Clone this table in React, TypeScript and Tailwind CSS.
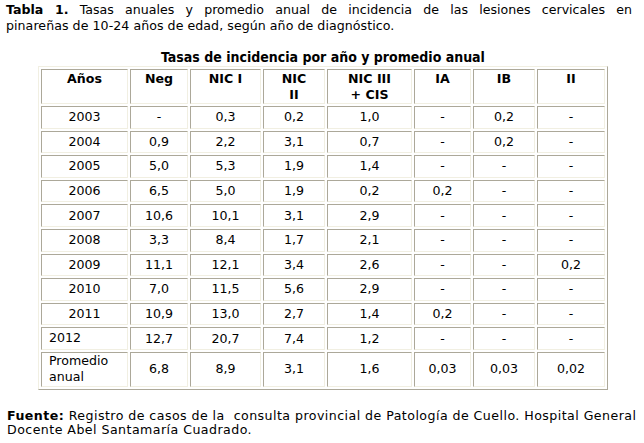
import React from "react";

const headers = [
  { label: ["Años"], w: "w-[87px]" },
  { label: ["Neg"], w: "w-[58px]" },
  { label: ["NIC I"], w: "w-[71px]" },
  { label: ["NIC", "II"], w: "w-[62px]" },
  { label: ["NIC III", "+ CIS"], w: "w-[85px]" },
  { label: ["IA"], w: "w-[57px]" },
  { label: ["IB"], w: "w-[62px]" },
  { label: ["II"], w: "w-[68px]" },
];

const rows = [
  ["2003", "-", "0,3", "0,2", "1,0", "-", "0,2", "-"],
  ["2004", "0,9", "2,2", "3,1", "0,7", "-", "0,2", "-"],
  ["2005", "5,0", "5,3", "1,9", "1,4", "-", "-", "-"],
  ["2006", "6,5", "5,0", "1,9", "0,2", "0,2", "-", "-"],
  ["2007", "10,6", "10,1", "3,1", "2,9", "-", "-", "-"],
  ["2008", "3,3", "8,4", "1,7", "2,1", "-", "-", "-"],
  ["2009", "11,1", "12,1", "3,4", "2,6", "-", "-", "0,2"],
  ["2010", "7,0", "11,5", "5,6", "2,9", "-", "-", "-"],
  ["2011", "10,9", "13,0", "2,7", "1,4", "0,2", "-", "-"],
];

const promedio = ["6,8", "8,9", "3,1", "1,6", "0,03", "0,03", "0,02"];

const cell =
  "border border-t-[#aca899] border-l-[#aca899] border-r-[#f1efe2] border-b-[#f1efe2] p-0";

const App = () => {
  return (
    <div className="w-[644px] h-[443px] bg-white text-black font-['DejaVu_Sans',sans-serif] text-[12.6px] overflow-hidden">
      <div className="pl-[6px] pr-[12px] pt-[2px] leading-[15.5px]">
        <div className="text-justify [text-align-last:justify]">
          <b>Tabla 1.</b> Tasas anuales y promedio anual de incidencia de las lesiones cervicales en
        </div>
        <div className="tracking-[0.05px]">pinareñas de 10-24 años de edad, según año de diagnóstico.</div>
      </div>

      <div className="mt-[16px] w-[570px] ml-[38px]">
        <div className="text-center font-['DejaVu_Sans_Condensed',sans-serif] font-bold text-[14px] leading-[17px]">
          Tasas de incidencia por año y promedio anual
        </div>
        <table className="table-fixed w-[570px] border-separate border-spacing-[2px] border border-t-[#f1efe2] border-l-[#f1efe2] border-r-[#aca899] border-b-[#aca899] leading-[16px]">
          <thead>
            <tr>
              {headers.map((header) => (
                <th
                  key={header.label.join(" ")}
                  className={`${cell} ${header.w} h-[35px] align-top pt-px font-bold text-center`}
                >
                  {header.label.map((line, i) => (
                    <div key={i}>{line}</div>
                  ))}
                </th>
              ))}
            </tr>
          </thead>
          <tbody>
            {rows.map((row) => (
              <tr key={row[0]}>
                {row.map((value, index) => (
                  <td key={index} className={`${cell} h-[22.6px] text-center align-middle`}>
                    {value}
                  </td>
                ))}
              </tr>
            ))}
            <tr>
              <td className={`${cell} h-[22.6px] text-left pl-[7px] align-top pt-[2px]`}>2012</td>
              {["12,7", "20,7", "7,4", "1,2", "-", "-", "-"].map((value, index) => (
                <td key={index} className={`${cell} h-[22.6px] text-center align-middle`}>
                  {value}
                </td>
              ))}
            </tr>
            <tr>
              <td className={`${cell} h-[35px] text-left pl-[7px] align-middle`}>
                Promedio
                <br />
                anual
              </td>
              {promedio.map((value, index) => (
                <td key={index} className={`${cell} h-[35px] text-center align-middle`}>
                  {value}
                </td>
              ))}
            </tr>
          </tbody>
        </table>
      </div>

      <div className="pl-[7px] mt-[19px] leading-[14.5px] tracking-[0.45px]">
        <b>Fuente:</b> Registro de casos de la&nbsp; consulta provincial de Patología de Cuello. Hospital General
        <br />
        Docente Abel Santamaría Cuadrado.
      </div>
    </div>
  );
};

export default App;
